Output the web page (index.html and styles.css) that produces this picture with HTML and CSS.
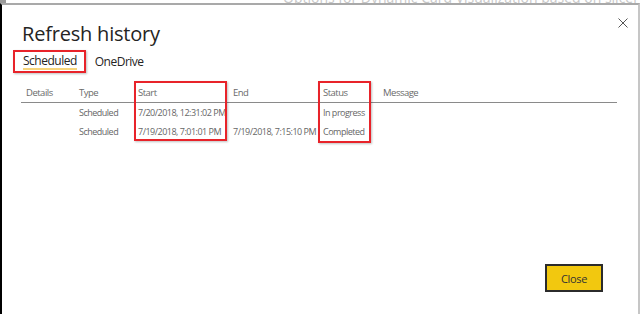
FILE: index.html
```html
<!DOCTYPE html>
<html>
<head>
<meta charset="utf-8">
<link rel="stylesheet" href="styles.css">
</head>
<body>
<div class="backdrop">
  <span class="backdrop-block"></span>
  <span class="backdrop-text">Options for Dynamic Card Visualization based on slicer</span>
</div>
<div class="dialog">
  <div class="dialog-head">
    <h1 class="title">Refresh history</h1>
    <button class="close-x" aria-label="Close">
      <svg width="10" height="10" viewBox="0 0 10 10"><path d="M0.5 0.5 L9.5 9.5 M9.5 0.5 L0.5 9.5" stroke="#555" stroke-width="1"/></svg>
    </button>
  </div>
  <div class="tabs">
    <span class="tab tab-active"><span class="tab-label">Scheduled</span></span>
    <span class="tab">OneDrive</span>
  </div>
  <div class="table">
    <div class="row head">
      <span>Details</span><span>Type</span><span>Start</span><span>End</span><span>Status</span><span>Message</span>
    </div>
    <div class="row">
      <span></span><span>Scheduled</span><span>7/20/2018, 12:31:02 PM</span><span></span><span>In progress</span><span></span>
    </div>
    <div class="row">
      <span></span><span>Scheduled</span><span>7/19/2018, 7:01:01 PM</span><span>7/19/2018, 7:15:10 PM</span><span>Completed</span><span></span>
    </div>
    <div class="mark mark-start"></div>
    <div class="mark mark-status"></div>
  </div>
  <div class="footer">
    <button class="btn-close">Close</button>
  </div>
</div>
</body>
</html>
```
FILE: styles.css
```css
html, body {
  margin: 0;
  padding: 0;
  background: #fff;
  overflow: hidden;
  font-family: "Open Sans", "Noto Sans", sans-serif;
}
body {
  width: 640px;
  height: 314px;
  display: flex;
  flex-direction: column;
}
.backdrop {
  height: 3px;
  overflow: hidden;
  display: flex;
  align-items: flex-end;
}
.backdrop-block {
  width: 6px;
  height: 3px;
  background: #9a9a9a;
  flex: none;
}
.backdrop-text {
  margin-left: 277px;
  font-size: 14px;
  line-height: 12px;
  color: #c8c8c8;
  white-space: nowrap;
  margin-bottom: -1px;
}
.dialog {
  flex: 1;
  border-top: 2px solid #a9a9a9;
  border-left: 2px solid #000;
  border-right: 2px solid #c6c6c6;
  display: flex;
  flex-direction: column;
}
.dialog-head {
  display: flex;
  justify-content: space-between;
  align-items: flex-start;
  padding: 0 10px 0 20px;
}
.title {
  margin: 15px 0 0;
  font-size: 20px;
  font-weight: 400;
  line-height: 28px;
  color: #252423;
  letter-spacing: -0.2px;
}
.close-x {
  margin-top: 13px;
  border: 0;
  background: none;
  padding: 0;
  width: 10px;
  height: 10px;
  display: flex;
}
.tabs {
  display: flex;
  align-items: center;
  margin: 2px 0 0 11px;
  gap: 9px;
}
.tab {
  font-size: 12px;
  letter-spacing: -0.5px;
  color: #252423;
  line-height: 16px;
}
.tab-active {
  border: 2px solid #e8232a;
  box-shadow: 1px 1px 2px rgba(0,0,0,0.25);
  padding: 1px 7px 1px 8px;
}
.tab-label {
  display: inline-block;
  border-bottom: 2px solid #f6d47a;
  line-height: 15px;
}
.table {
  margin: 12px 21px 0 19px;
  position: relative;
}
.row {
  display: grid;
  grid-template-columns: 53px 59px 95px 90px 60px 1fr;
  padding-left: 5px;
  font-size: 9px;
  letter-spacing: -0.5px;
  color: #666;
  line-height: 19px;
  height: 19px;
  white-space: nowrap;
}
.row.head {
  font-size: 9.5px;
  letter-spacing: -0.5px;
  color: #6a6a6a;
  border-bottom: 1px solid #8a8a8a;
  height: 17px;
  line-height: 16px;
}
.mark {
  position: absolute;
  border: 2px solid #e8232a;
  box-shadow: 1px 1px 2px rgba(0,0,0,0.25);
}
.mark-start {
  left: 113px;
  top: -4px;
  width: 89px;
  height: 56px;
}
.mark-status {
  left: 297px;
  top: -4px;
  width: 49px;
  height: 58px;
}
.footer {
  margin-top: auto;
  display: flex;
  justify-content: flex-end;
  padding: 0 35px 22px 0;
}
.btn-close {
  width: 58px;
  height: 28px;
  background: #f2c80f;
  border: 2px solid #2b2b2b;
  font-family: inherit;
  font-size: 11px;
  letter-spacing: -0.3px;
  color: #333;
  padding: 0;
}
```
